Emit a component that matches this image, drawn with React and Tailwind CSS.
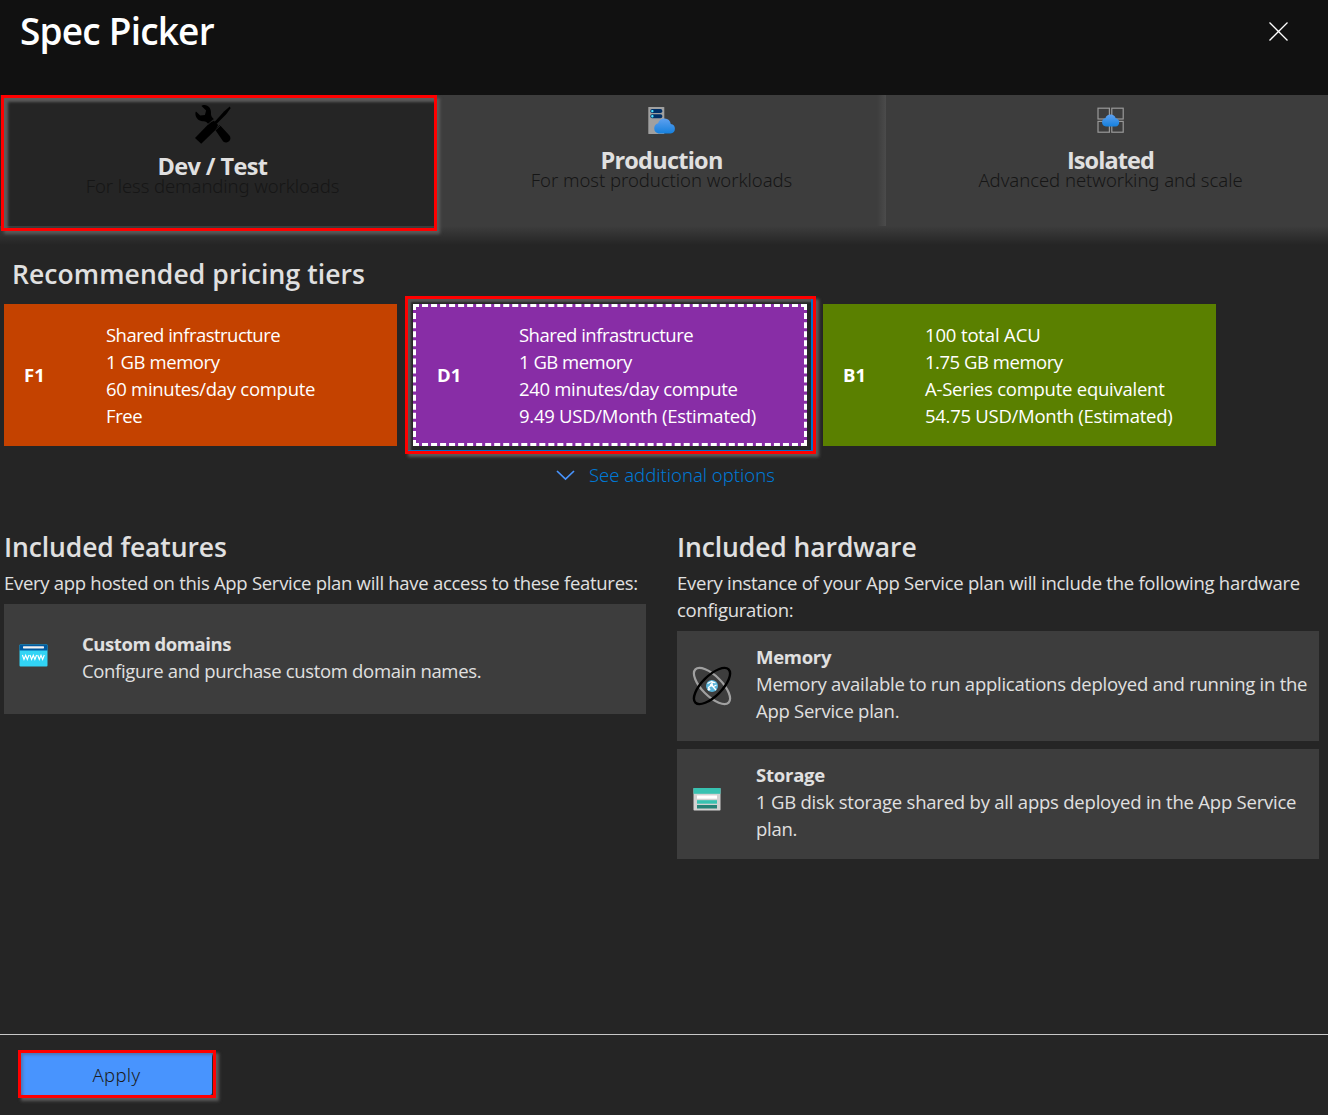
function ToolsIcon() {
  return (
    <svg width="36" height="39" viewBox="0 0 36 39" className="shrink-0">
      <path d="M20 24.500l4.800-4.500L34 30a4.300 4.300 0 0 1-5.800 6.400z" fill="#000" />
      <path
        d="M6.500.9c.6-.7 1.600-.9 3-.9 4 .2 6.700 3.500 6.500 7.800-.1 2 .2 3.400 1.300 4.600l1.600 1.800-5.600 4.900-1.700-1.800c-1-.9-2.300-1-4.100-1C4 16.200.2 13 .4 8.600c0-1.600.5-2.200 1.200-1.500l3.600 3.500 4.700-.6 1.200-4.600z"
        fill="#000"
      />
      <path d="M34.800 1.500l.8 1.800-4.200 5.800L21.500 19l-2-2L29.200 6.300z" fill="#000" />
      <path d="M14.500 18l4.400-2.200 4.200 4.200-2.400 4.700L6.200 38.800 0 33z" fill="#000" />
      <path d="M20.500 25l6-5.400M13 19.300l5.500-4.800" stroke="#252525" strokeWidth="0.900" />
    </svg>
  );
}

function ServerCloudIcon() {
  return (
    <svg width="28" height="28" viewBox="0 0 28 28" className="shrink-0">
      <defs>
        <linearGradient id="cloudA" x1="0" y1="0" x2="0" y2="1">
          <stop offset="0" stopColor="#5ea0ef" />
          <stop offset="1" stopColor="#1580dd" />
        </linearGradient>
      </defs>
      <rect x="0.300" y="0" width="16" height="27" rx="0.6" fill="#a0a0a0" />
      <rect x="2.300" y="2" width="12" height="4" rx="1.800" fill="#003067" />
      <rect x="2.300" y="7.200" width="12" height="4" rx="1.800" fill="#003067" />
      <rect x="3.200" y="2.900" width="2.300" height="2.300" rx="0.900" fill="#50e6ff" />
      <rect x="3.200" y="8.100" width="2.300" height="2.300" rx="0.900" fill="#50e6ff" />
      <path d="M10.500 26.600a5.300 5.300 0 0 1-.4-10.300 6.500 6.500 0 0 1 12.700.6 4.900 4.900 0 0 1-.2 9.700z" fill="url(#cloudA)" />
    </svg>
  );
}

function IsolatedIcon() {
  return (
    <svg width="28" height="28" viewBox="0 0 28 28" className="shrink-0">
      <g fill="none" stroke="#999" strokeWidth="1.200">
        <rect x="1" y="1.200" width="11.400" height="10.800" />
        <rect x="14.800" y="1.200" width="11.400" height="10.800" />
        <rect x="1" y="14.400" width="11.400" height="10.800" />
        <rect x="14.800" y="14.400" width="11.400" height="10.800" />
      </g>
      <path d="M8.900 19.500a4.200 4.200 0 0 1-.5-8.300 5.400 5.400 0 0 1 10.300 0 4.200 4.200 0 0 1-.2 8.300z" fill="url(#cloudA)" />
    </svg>
  );
}

function DomainIcon() {
  return (
    <svg width="29" height="23" viewBox="0 0 29 23">
      <rect x="0.500" y="0.500" width="28" height="22" rx="1" fill="#32d4f5" />
      <path d="M.5 6.500v-5a1 1 0 0 1 1-1h26a1 1 0 0 1 1 1v5z" fill="#005ba1" />
      <rect x="4" y="2.200" width="21" height="2.200" rx="0.6" fill="#f2f2f2" />
      <path
        d="M3.400 11l1.600 4.500 1.700-4.200 1.600 4.200L10 11M11 11l1.600 4.500 1.700-4.200 1.600 4.200L17.600 11M18.700 11l1.600 4.500 1.700-4.200 1.600 4.200 1.700-4.500"
        fill="none"
        stroke="#fff"
        strokeWidth="1.100"
      />
    </svg>
  );
}

function MemoryIcon() {
  return (
    <svg width="40" height="40" viewBox="0 0 40 40">
      <ellipse cx="20" cy="20" rx="23.500" ry="10" transform="rotate(45 20 20)" fill="none" stroke="#a0a0a0" strokeWidth="2.200" />
      <ellipse cx="20" cy="20" rx="23.500" ry="10" transform="rotate(-45 20 20)" fill="none" stroke="#000" strokeWidth="2.400" />
      <circle cx="20" cy="20" r="6" fill="#59b4d9" />
      <path d="M15.500 17.500l4-2 4 1.500M16 22l3.500-3 4.500 5M19.500 19l1-3.500M24.500 19l-3 1.500" fill="none" stroke="#fff" strokeWidth="1.300" />
      <circle cx="19.500" cy="19" r="1.600" fill="#fff" />
      <circle cx="17" cy="23.200" r="1.300" fill="#fff" />
    </svg>
  );
}

function StorageIcon() {
  return (
    <svg width="28" height="24" viewBox="0 0 28 24">
      <rect x="0.500" y="1" width="27" height="22.500" rx="0.800" fill="#d2d2d2" />
      <rect x="0.500" y="1" width="27" height="5.800" fill="#37c2b1" />
      <rect x="4" y="8.500" width="20" height="3.200" fill="#fff" />
      <rect x="4" y="13.200" width="20" height="3.500" fill="#37c2b1" />
      <rect x="4" y="18" width="20" height="3.500" fill="#258277" />
    </svg>
  );
}

function Tab({ icon, title, titleClass, text, textClass, className }) {
  return (
    <div className={"relative flex w-[449px] shrink-0 flex-col items-center " + className}>
      {icon}
      <div className={"text-[23.5px] leading-7 font-bold text-[#e0e0e0] " + titleClass}>{title}</div>
      <div className={"-mt-2 font-['Noto_Sans',sans-serif] text-[18.5px] leading-[27px] font-light text-[#161616] " + textClass}>{text}</div>
    </div>
  );
}

function Tier({ name, lines, className }) {
  return (
    <div className={"flex h-[142px] items-center text-white " + className}>
      <div className="w-[82px] text-[18.5px] font-bold">{name}</div>
      <div className="text-[18.5px] leading-[27px]">
        {lines.map(([text, tracking]) => (
          <div key={text} className={"whitespace-nowrap " + tracking}>{text}</div>
        ))}
      </div>
    </div>
  );
}

function InfoCard({ icon, title, titleClass, lines, textClass }) {
  return (
    <div className="flex h-[110px] items-center bg-[#3d3d3d] pl-[15px]">
      <div className="flex w-16 shrink-0">{icon}</div>
      <div className={"text-[18.5px] leading-[27px] whitespace-nowrap " + textClass}>
        <div className={"font-bold " + titleClass}>{title}</div>
        {lines.map(([text, tracking]) => (
          <div key={text} className={tracking}>{text}</div>
        ))}
      </div>
    </div>
  );
}

export default function App() {
  return (
    <div className="flex h-[1115px] w-[1328px] flex-col overflow-hidden bg-[#252525] font-['Open_Sans',sans-serif] text-[#e0e0e0]">
      <header className="flex h-[95px] shrink-0 items-start justify-between bg-[#111] pr-10 pl-5">
        <h1 className="pt-[11px] text-[37px] leading-10 font-semibold tracking-[-0.8px] text-white">Spec Picker</h1>
        <svg width="19" height="19" viewBox="0 0 19 19" className="mt-[22px]">
          <path d="M.5.5l18 18M18.500.5l-18 18" stroke="#fff" strokeWidth="1.300" />
        </svg>
      </header>

      <div className="relative h-[150px] shrink-0">
        <div className="-ml-3 flex h-[131px]">
          <Tab
            className="bg-[#252525] pt-[10px]"
            icon={<ToolsIcon />}
            title="Dev / Test"
            titleClass="mt-2 tracking-[-0.6px]"
            text="For less demanding workloads"
            textClass="tracking-[-0.09px]"
          />
          <Tab
            className="bg-[#3d3d3d] bg-linear-to-r from-[#3d3d3d] from-98% to-[#4b4b4b] pt-3"
            icon={<ServerCloudIcon />}
            title="Production"
            titleClass="mt-[11px] tracking-[-0.75px]"
            text="For most production workloads"
            textClass="tracking-[-0.04px]"
          />
          <Tab
            className="bg-[#3d3d3d] pt-3"
            icon={<IsolatedIcon />}
            title="Isolated"
            titleClass="mt-[11px] tracking-[-0.9px]"
            text="Advanced networking and scale"
            textClass="tracking-[-0.04px]"
          />
        </div>
        <div className="h-[19px] bg-linear-to-b from-[#3d3d3d] to-[#252525]" />
        <div className="absolute top-0 left-px h-[136px] w-[436px] border-3 border-[#f00] shadow-[3px_3px_3px_#5c5c5c,inset_4px_4px_3px_#5c5c5c]" />
      </div>

      <h2 className="mt-[11px] ml-3 text-[26.5px] leading-9 font-semibold tracking-[0.08px]">Recommended pricing tiers</h2>

      <div className="mt-3 ml-1 flex gap-4">
        <Tier
          className="w-[393px] bg-[#c44200] pl-5"
          name="F1"
          lines={[
            ["Shared infrastructure", "tracking-[-0.52px]"],
            ["1 GB memory", "tracking-[-0.42px]"],
            ["60 minutes/day compute", "tracking-[-0.29px]"],
            ["Free", "tracking-[-0.4px]"],
          ]}
        />
        <div className="relative">
          <Tier
            className="w-[394px] border-3 border-dashed border-white bg-[#882da6] pl-[21px]"
            name="D1"
            lines={[
              ["Shared infrastructure", "tracking-[-0.52px]"],
              ["1 GB memory", "tracking-[-0.5px]"],
              ["240 minutes/day compute", "tracking-[-0.32px]"],
              ["9.49 USD/Month (Estimated)", "tracking-[-0.27px]"],
            ]}
          />
          <div className="absolute -top-2 -left-2 h-[158px] w-[411px] border-3 border-[#f00] shadow-[3px_3px_3px_#5c5c5c,inset_-2px_-1px_0_#0072c9,inset_3px_3px_2px_#555]" />
        </div>
        <Tier
          className="w-[393px] bg-[#5a8000] pl-5"
          name="B1"
          lines={[
            ["100 total ACU", "tracking-[-0.15px]"],
            ["1.75 GB memory", "tracking-[-0.47px]"],
            ["A-Series compute equivalent", "tracking-[-0.25px]"],
            ["54.75 USD/Month (Estimated)", "tracking-[-0.27px]"],
          ]}
        />
      </div>

      <div className="mt-[15px] ml-[556px] flex h-[27px] items-center gap-[14px]">
        <svg width="19" height="11" viewBox="0 0 19 11" className="mt-[2px]">
          <path d="M1 1l8.500 8L18 1" fill="none" stroke="#4894fe" strokeWidth="1.700" />
        </svg>
        <span className="font-['Noto_Sans',sans-serif] text-[18.5px] leading-[27px] font-light tracking-[-0.03px] text-[#0078d4]">See additional options</span>
      </div>

      <div className="mt-[41px] ml-1 grid grid-cols-[642px_642px] gap-[31px]">
        <section>
          <h2 className="text-[26.5px] leading-9 font-semibold tracking-[-0.11px]">Included features</h2>
          <p className="mt-1 mb-2 text-[18.5px] leading-[27px] tracking-[-0.29px] whitespace-nowrap">
            Every app hosted on this App Service plan will have access to these features:
          </p>
          <InfoCard
            icon={<div className="-mt-2"><DomainIcon /></div>}
            title="Custom domains"
            titleClass="tracking-[-0.44px]"
            textClass="-ml-px pb-1"
            lines={[["Configure and purchase custom domain names.", "tracking-[-0.34px]"]]}
          />
        </section>
        <section>
          <h2 className="text-[26.5px] leading-9 font-semibold tracking-[-0.1px]">Included hardware</h2>
          <p className="mt-1 mb-2 text-[18.5px] leading-[27px] tracking-[-0.26px]">
            Every instance of your App Service plan will include the following hardware
            <br />
            configuration:
          </p>
          <div className="flex flex-col gap-2">
            <InfoCard
              icon={<MemoryIcon />}
              title="Memory"
              titleClass="tracking-[-0.3px]"
              textClass="pb-[6px]"
              lines={[
                ["Memory available to run applications deployed and running in the", "tracking-[-0.26px]"],
                ["App Service plan.", "tracking-[-0.26px]"],
              ]}
            />
            <InfoCard
              icon={<div className="-mt-2.5 ml-px"><StorageIcon /></div>}
              title="Storage"
              titleClass="tracking-[-0.23px]"
              textClass="pb-[6px]"
              lines={[
                ["1 GB disk storage shared by all apps deployed in the App Service", "tracking-[-0.22px]"],
                ["plan.", "tracking-[-0.26px]"],
              ]}
            />
          </div>
        </section>
      </div>

      <footer className="mt-auto h-[81px] shrink-0 border-t border-[#c8c8c8] pt-[18px] pl-[21px]">
        <div className="relative w-[191px]">
          <button className="block h-[42px] w-full rounded-[2px] bg-[#4894fe] pt-px font-['Noto_Sans',sans-serif] text-[18.5px] font-light tracking-[0.3px] text-[#1c1c1c]">Apply</button>
          <div className="absolute -top-[3px] -left-[3px] h-12 w-[198px] border-3 border-[#f00] shadow-[3px_3px_3px_#5c5c5c,inset_2px_2px_3px_#4a78b8]" />
        </div>
      </footer>
    </div>
  );
}
